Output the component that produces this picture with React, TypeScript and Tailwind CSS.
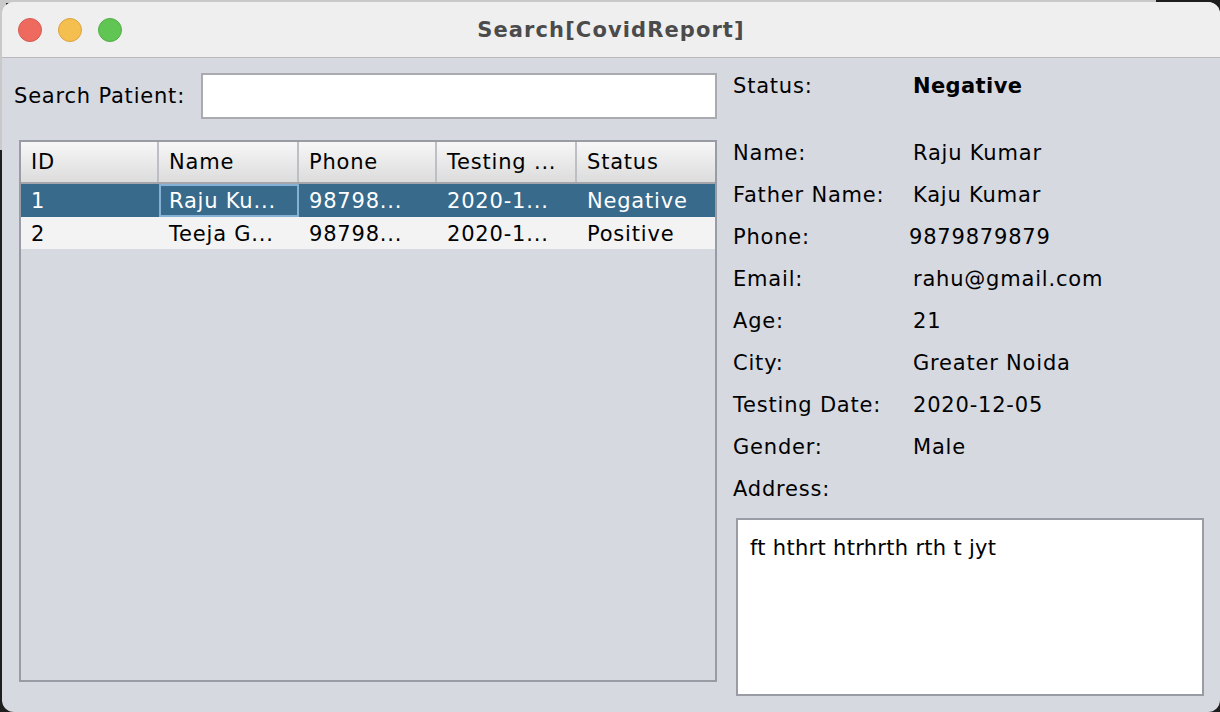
import React from "react";

const font = { fontFamily: '"DejaVu Sans", "Liberation Sans", sans-serif' };

const cols = [
  { h: "ID", w: "w-[138px]" },
  { h: "Name", w: "w-[140px]" },
  { h: "Phone", w: "w-[138px]" },
  { h: "Testing ...", w: "w-[140px]" },
  { h: "Status", w: "w-[138px]" },
];

const rows = [
  ["1", "Raju Ku...", "98798...", "2020-1...", "Negative"],
  ["2", "Teeja G...", "98798...", "2020-1...", "Positive"],
];

const details: [string, string, string?][] = [
  ["Name:", "Raju Kumar"],
  ["Father Name:", "Kaju Kumar"],
  ["Phone:", "9879879879", "ml-[-4px]"],
  ["Email:", "rahu@gmail.com"],
  ["Age:", "21"],
  ["City:", "Greater Noida"],
  ["Testing Date:", "2020-12-05"],
  ["Gender:", "Male"],
  ["Address:", ""],
];

export default function App() {
  return (
    <div className="w-[1220px] h-[712px] overflow-hidden bg-[#1e1e1e] relative" style={font}>
      <div className="absolute left-0 top-0 w-[1156px] h-[3px] bg-[#c9c9c9]" />
      <div className="absolute left-0 top-0 w-[6px] h-[150px] bg-[#c9c9c9]" />
      <div className="relative ml-[2px] mt-[2px] w-[1218px] h-[710px] rounded-[12px] overflow-hidden flex flex-col bg-[#d6d9e0]">
        {/* Title bar */}
        <div className="h-[56px] shrink-0 bg-[#f0eff0] border-b border-[#b9b9bd] flex items-center relative">
          <div className="flex items-center gap-[16px] pl-[16px]">
            <div className="w-[24px] h-[24px] rounded-full bg-[#ee6a5f] border border-[#d65a50]" />
            <div className="w-[24px] h-[24px] rounded-full bg-[#f5bf4f] border border-[#d9a43e]" />
            <div className="w-[24px] h-[24px] rounded-full bg-[#61c554] border border-[#52ad46]" />
          </div>
          <div className="absolute inset-0 pt-[3px] flex items-center justify-center text-[21px] font-bold tracking-[1.1px] text-[#4b4b4b] pointer-events-none">
            Search[CovidReport]
          </div>
        </div>
        {/* Content */}
        <div className="flex flex-1 text-[21px] tracking-[0.8px] text-black">
          {/* Left */}
          <div className="w-[718px] shrink-0 flex flex-col pl-[17px] pt-[15px]">
            <div className="flex items-center h-[46px]">
              <span className="w-[187px] -ml-[5px] pt-[2px]">Search Patient:</span>
              <div className="w-[516px] h-[46px] bg-white border-2 border-[#a9abb1]" />
            </div>
            <div className="mt-[21px] w-[698px] h-[542px] border-2 border-[#9a9ca5] flex flex-col">
              <div className="flex h-[42px] border-b-2 border-[#a3a5ab] bg-gradient-to-b from-[#f7f7f7] to-[#dcdcdc]">
                {cols.map((c, i) => (
                  <div
                    key={i}
                    className={`${c.w} flex items-center pl-[10px] pt-[2px] ${i < 4 ? "border-r-2 border-[#bdbfc4]" : ""}`}
                  >
                    {c.h}
                  </div>
                ))}
              </div>
              {rows.map((r, ri) => (
                <div
                  key={ri}
                  className={`flex ${ri === 0 ? "bg-[#386a8c] text-white h-[33px]" : "bg-[#f3f3f3] text-black h-[32px]"}`}
                >
                  {r.map((cell, ci) => (
                    <div
                      key={ci}
                      className={`${cols[ci].w} flex items-center whitespace-nowrap pt-[3px] ${ri === 0 && ci === 1 ? "border-2 border-[#86b1d6] pl-[8px] pt-[1px]" : "pl-[10px]"}`}
                    >
                      {cell}
                    </div>
                  ))}
                </div>
              ))}
            </div>
          </div>
          {/* Right */}
          <div className="flex-1 flex flex-col pl-[13px] pt-[8px]">
            <div className="flex items-center h-[42px]">
              <span className="w-[180px]">Status:</span>
              <span className="font-bold tracking-[0.4px]">Negative</span>
            </div>
            <div className="mt-[25px] flex flex-col">
              {details.map(([l, v, cls], i) => (
                <div key={i} className="flex items-center h-[42px] whitespace-nowrap">
                  <span className="w-[180px]">{l}</span>
                  <span className={`${cls ?? ""}`}>{v}</span>
                </div>
              ))}
            </div>
            <div className="mt-[7px] ml-[3px] w-[468px] h-[178px] bg-white border-2 border-[#9a9ca5] px-[12px] pt-[16px] leading-[24px] tracking-[0.3px]">
              ft hthrt htrhrth rth t jyt
            </div>
          </div>
        </div>
      </div>
    </div>
  );
}
